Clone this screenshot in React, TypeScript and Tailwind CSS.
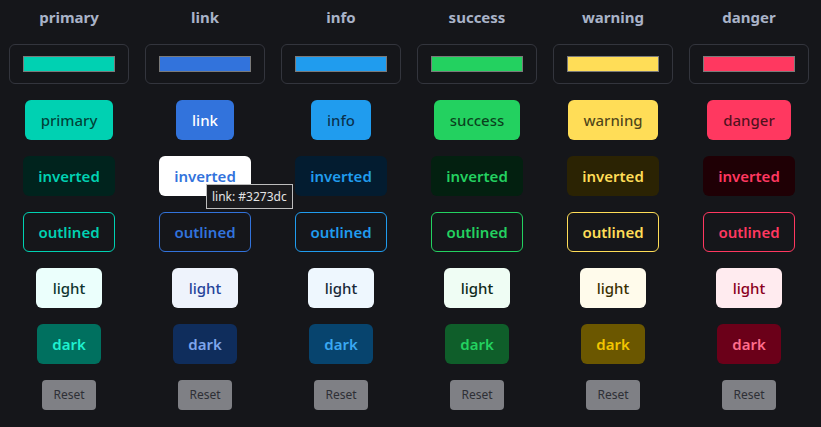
import React from "react";

type Col = {
  name: string;
  w: string;
  swatch: string;
  filled: string;
  inverted: string;
  outlined: string;
  light: string;
  dark: string;
};

const cols: Col[] = [
  {
    name: "primary",
    w: "w-[88px]",
    swatch: "bg-[#00d1b2]",
    filled: "bg-[#00d1b2] text-[rgba(0,0,0,0.7)]",
    inverted: "bg-[#00231d] text-[#00d1b2]",
    outlined: "border border-[#00d1b2] text-[#00d1b2]",
    light: "bg-[#ebfffc] text-[#0f3530]",
    dark: "bg-[#00705f] text-[#1ff0cf]",
  },
  {
    name: "link",
    w: "w-[58px]",
    swatch: "bg-[#3273dc]",
    filled: "bg-[#3273dc] text-white",
    inverted: "bg-white text-[#3273dc]",
    outlined: "border border-[#3273dc] text-[#3273dc]",
    light: "bg-[#eef3fc] text-[#24439a]",
    dark: "bg-[#0f2d5c] text-[#7ea5ec]",
  },
  {
    name: "info",
    w: "w-[60px]",
    swatch: "bg-[#209cee]",
    filled: "bg-[#209cee] text-[rgba(0,0,0,0.7)]",
    inverted: "bg-[#031c30] text-[#209cee]",
    outlined: "border border-[#209cee] text-[#209cee]",
    light: "bg-[#eef7fe] text-[#182838]",
    dark: "bg-[#07446e] text-[#3aa8f2]",
  },
  {
    name: "success",
    w: "w-[86px]",
    swatch: "bg-[#23d160]",
    filled: "bg-[#23d160] text-[rgba(0,0,0,0.7)]",
    inverted: "bg-[#032010] text-[#23d160]",
    outlined: "border border-[#23d160] text-[#23d160]",
    light: "bg-[#effdf4] text-[#102a1a]",
    dark: "bg-[#0f5e2a] text-[#23d160]",
  },
  {
    name: "warning",
    w: "w-[90px]",
    swatch: "bg-[#ffdd57]",
    filled: "bg-[#ffdd57] text-[rgba(0,0,0,0.7)]",
    inverted: "bg-[#2b2303] text-[#ffdd57]",
    outlined: "border border-[#ffdd57] text-[#ffdd57]",
    light: "bg-[#fffbeb] text-[#3a3000]",
    dark: "bg-[#6b5700] text-[#f2c500]",
  },
  {
    name: "danger",
    w: "w-[84px]",
    swatch: "bg-[#ff3860]",
    filled: "bg-[#ff3860] text-[rgba(0,0,0,0.7)]",
    inverted: "bg-[#1f0005] text-[#ff3860]",
    outlined: "border border-[#ff3860] text-[#ff3860]",
    light: "bg-[#ffebef] text-[#8a0020]",
    dark: "bg-[#6b0019] text-[#ff6d8c]",
  },
];

function Btn({ cls, children, weight, w }: { cls: string; children: React.ReactNode; weight: string; w: string }) {
  return (
    <div
      className={`mt-4 h-10 ${w} rounded-[6px] flex items-center justify-center text-[15px] leading-none whitespace-nowrap ${weight} ${cls}`}
    >
      {children}
    </div>
  );
}

export default function App() {
  return (
    <div
      className="w-[821px] h-[427px] bg-[#15161a] overflow-hidden pl-[1px] pt-[5px]"
      style={{ fontFamily: '"Noto Sans", "Open Sans", sans-serif' }}
    >
      <div className="grid grid-cols-[repeat(6,136px)]">
        {cols.map((c) => (
          <div key={c.name} className="flex flex-col items-center relative">
            <div className="h-6 leading-6 text-[15px] font-bold text-[#a9b3c8]">{c.name}</div>
            <div className="mt-[15px] w-[120px] h-10 rounded-[6px] border border-[#33353d] flex items-center justify-center">
              <div className={`w-[92px] h-4 border border-[#7a7a7a] ${c.swatch}`} />
            </div>
            <Btn cls={c.filled} weight="font-medium" w={c.w}>{c.name}</Btn>
            <Btn cls={c.inverted} weight="font-semibold" w="w-[92px]">inverted</Btn>
            <Btn cls={c.outlined} weight="font-semibold" w="w-[92px]">outlined</Btn>
            <Btn cls={c.light} weight="font-medium" w="w-[66px]">light</Btn>
            <Btn cls={c.dark} weight="font-semibold" w="w-16">dark</Btn>
            <div className="mt-4 h-[30px] w-[54px] rounded-[4px] bg-[#7f8085] text-[#2e2f35] text-[12px] flex items-center justify-center">
              Reset
            </div>
            {c.name === "link" && (
              <div className="absolute left-[69px] top-[179px] h-[25px] px-[5px] border border-[#bdbdbd] bg-[#1b1b1e] text-[#e4e4e4] text-[12px] flex items-center whitespace-nowrap">
                link: #3273dc
              </div>
            )}
          </div>
        ))}
      </div>
    </div>
  );
}
